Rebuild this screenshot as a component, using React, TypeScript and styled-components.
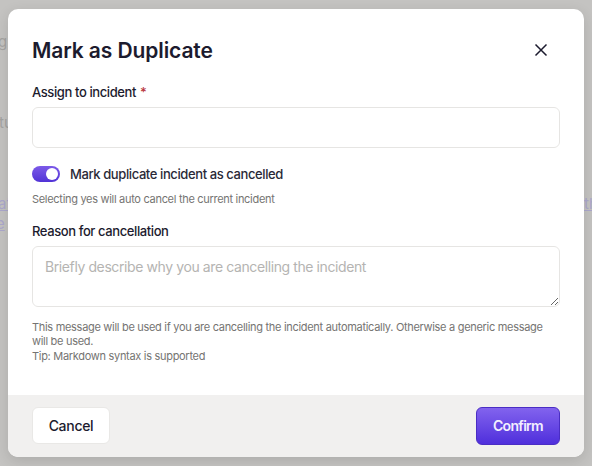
import React from 'react';
import styled, { createGlobalStyle } from 'styled-components';

const GlobalStyle = createGlobalStyle`
  html, body {
    margin: 0;
    padding: 0;
    width: 592px;
    height: 466px;
    overflow: hidden;
    background: #c4c3c1;
    font-family: Inter, "Liberation Sans", sans-serif;
    -webkit-font-smoothing: antialiased;
  }
`;

const Backdrop = styled.div`
  width: 592px;
  height: 466px;
  padding: 9px 8px;
  box-sizing: border-box;
  background: #c4c3c1;
`;

const GhostText = styled.span<{ $x: number; $y: number; $link?: boolean }>`
  position: absolute;
  left: ${p => p.$x}px;
  top: ${p => p.$y}px;
  font-size: 15px;
  line-height: 18px;
  color: ${p => (p.$link ? '#aca8cc' : '#a5a4a2')};
  text-decoration: ${p => (p.$link ? 'underline' : 'none')};
`;

const Modal = styled.div`
  position: relative;
  width: 576px;
  height: 448px;
  display: flex;
  flex-direction: column;
  background: #fff;
  border-radius: 10px;
  overflow: hidden;
  box-shadow: 0 4px 14px rgba(0, 0, 0, 0.12);
`;

const Body = styled.div`
  flex: 1;
  padding: 0 24px;
  display: flex;
  flex-direction: column;
`;

const Header = styled.div`
  height: 74px;
  padding-top: 22px;
  box-sizing: border-box;
  display: flex;
  align-items: flex-start;
  justify-content: space-between;
`;

const Title = styled.h2`
  margin: 0;
  font-size: 21px;
  line-height: 40px;
  font-weight: 600;
  letter-spacing: -0.1px;
  color: #1c1b2e;
  height: 40px;
`;

const CloseButton = styled.button`
  width: 16px;
  height: 16px;
  margin: 11px 11px 0 0;
  padding: 0;
  border: 0;
  background: none;
  display: flex;
`;

const Label = styled.label`
  display: block;
  font-size: 13px;
  line-height: 18px;
  font-weight: 450;
  letter-spacing: -0.4px;
  color: #1c1b2e;
`;

const Required = styled.span`
  color: #b8343c;
  margin-left: 4px;
`;

const TextBox = styled.input`
  display: block;
  box-sizing: border-box;
  width: 528px;
  height: 41px;
  margin-top: 6px;
  border: 1px solid #e6e5e3;
  border-radius: 6px;
  background: #fff;
  outline: none;
`;

const SwitchRow = styled.div`
  display: flex;
  align-items: center;
  gap: 10px;
  margin-top: 17px;
  height: 18px;
`;

const Toggle = styled.span`
  position: relative;
  width: 28px;
  height: 16px;
  border-radius: 8px;
  background: linear-gradient(180deg, #7c5ae8 0%, #5133d6 100%);
`;

const Knob = styled.span`
  position: absolute;
  top: 2px;
  right: 2px;
  width: 12px;
  height: 12px;
  border-radius: 50%;
  background: #fff;
`;

const SwitchLabel = styled.span`
  font-size: 13px;
  line-height: 18px;
  font-weight: 450;
  letter-spacing: -0.4px;
  color: #2a2937;
`;

const Hint = styled.p<{ $top: number }>`
  margin: ${p => p.$top}px 0 0;
  font-size: 11px;
  line-height: 14.5px;
  letter-spacing: -0.3px;
  color: #757472;
`;

const ReasonLabel = styled(Label)`
  margin-top: 15px;
`;

const TextArea = styled.textarea`
  display: block;
  box-sizing: border-box;
  width: 528px;
  min-width: 528px;
  height: 61px;
  margin-top: 6px;
  padding: 11px 12px;
  border: 1px solid #e6e5e3;
  border-radius: 6px;
  background: #fff;
  outline: none;
  font-family: inherit;
  font-size: 14px;
  line-height: 17px;
  letter-spacing: -0.4px;
  &::placeholder {
    color: #b5b4b2;
  }
`;

const Footer = styled.div`
  height: 62px;
  box-sizing: border-box;
  padding: 12px 24px 13px;
  background: #f1f0ef;
  display: flex;
  align-items: center;
  justify-content: space-between;
`;

const CancelButton = styled.button`
  width: 78px;
  height: 37px;
  border: 1px solid #e9e8e6;
  border-radius: 6px;
  background: #fff;
  font-family: inherit;
  font-size: 14px;
  font-weight: 450;
  letter-spacing: -0.3px;
  color: #1c1b2e;
`;

const ConfirmButton = styled.button`
  width: 84px;
  height: 38px;
  border: 1px solid #4a2dc4;
  border-radius: 6px;
  background: linear-gradient(180deg, #8263ee 0%, #4f2fdc 100%);
  font-family: inherit;
  font-size: 14px;
  font-weight: 600;
  letter-spacing: -0.7px;
  color: #f3efff;
`;

export default function App() {
  return (
    <>
      <GlobalStyle />
      <Backdrop>
        <GhostText $x={-2} $y={33}>g</GhostText>
        <GhostText $x={-1} $y={114}>tu</GhostText>
        <GhostText $x={-2} $y={195} $link>at</GhostText>
        <GhostText $x={-4} $y={215} $link>e</GhostText>
        <GhostText $x={584} $y={195} $link>th</GhostText>
        <Modal>
          <Body>
            <Header>
              <Title>Mark as Duplicate</Title>
              <CloseButton aria-label="Close">
                <svg width="16" height="16" viewBox="0 0 16 16" fill="none">
                  <path d="M2.5 2.5 13.5 13.5M13.5 2.5 2.5 13.5" stroke="#1c1b2e" strokeWidth="1.5" />
                </svg>
              </CloseButton>
            </Header>
            <Label>
              Assign to incident<Required>*</Required>
            </Label>
            <TextBox />
            <SwitchRow>
              <Toggle>
                <Knob />
              </Toggle>
              <SwitchLabel>Mark duplicate incident as cancelled</SwitchLabel>
            </SwitchRow>
            <Hint $top={9}>Selecting yes will auto cancel the current incident</Hint>
            <ReasonLabel>Reason for cancellation</ReasonLabel>
            <TextArea placeholder="Briefly describe why you are cancelling the incident" />
            <Hint $top={13}>
              This message will be used if you are cancelling the incident automatically. Otherwise a generic message will be used.
              <br />
              Tip: Markdown syntax is supported
            </Hint>
          </Body>
          <Footer>
            <CancelButton>Cancel</CancelButton>
            <ConfirmButton>Confirm</ConfirmButton>
          </Footer>
        </Modal>
      </Backdrop>
    </>
  );
}
